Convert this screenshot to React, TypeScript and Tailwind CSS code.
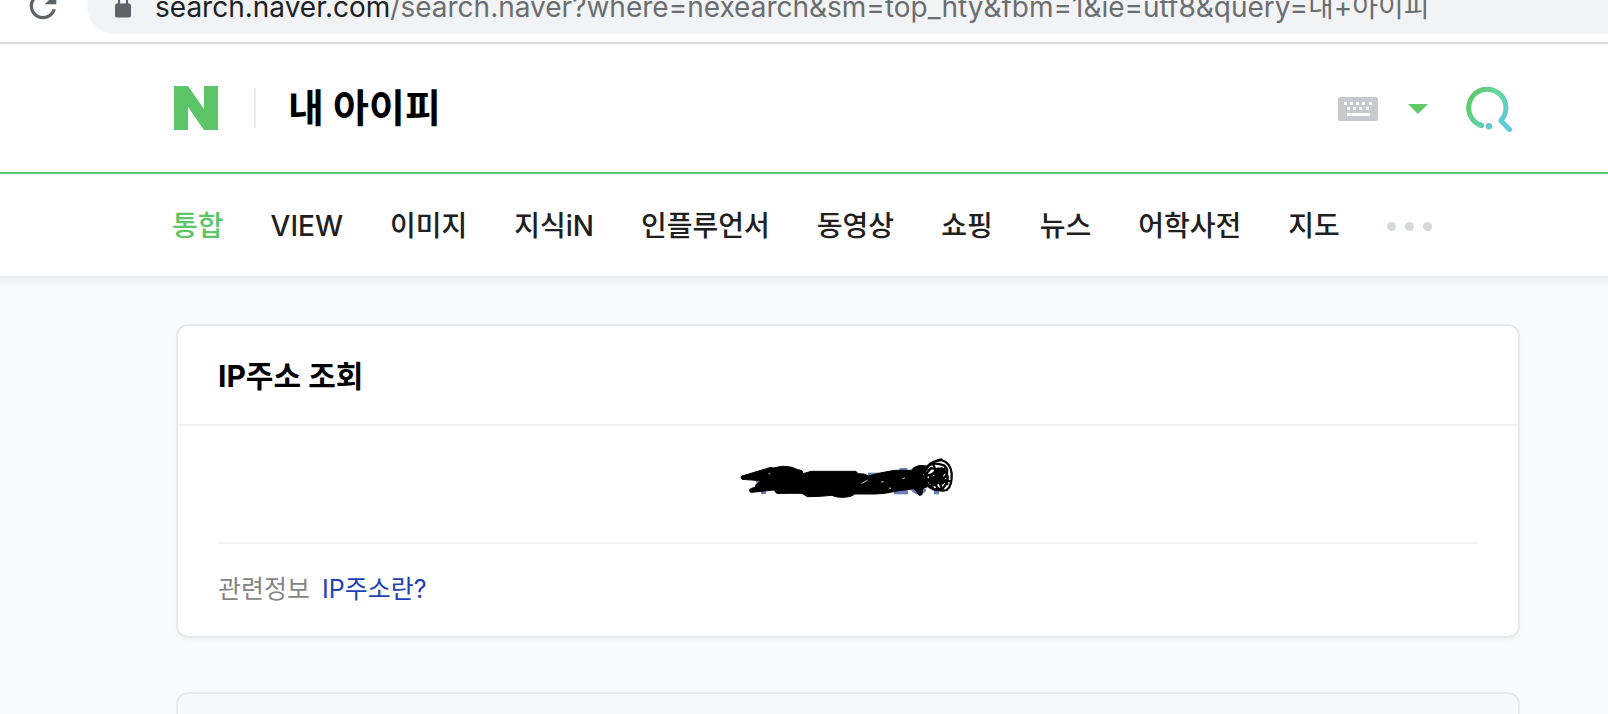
import { useState } from 'react';
import { MdRefresh } from 'react-icons/md';

const tabs = [
  { id: 'all', label: '통합' },
  { id: 'view', label: 'VIEW' },
  { id: 'image', label: '이미지' },
  { id: 'kin', label: '지식iN' },
  { id: 'influencer', label: '인플루언서' },
  { id: 'video', label: '동영상' },
  { id: 'shopping', label: '쇼핑' },
  { id: 'news', label: '뉴스' },
  { id: 'dict', label: '어학사전' },
  { id: 'map', label: '지도' },
];

function LockIcon() {
  return (
    <svg viewBox="0 0 24 24" className="size-6 shrink-0 text-[#5f6368]">
      <rect x="4" y="8.5" width="16" height="14" rx="2" fill="currentColor" />
      <path d="M8 10V5a4 4 0 0 1 8 0v5" fill="none" stroke="currentColor" strokeWidth="2.2" />
    </svg>
  );
}

function KeyboardIcon() {
  return (
    <svg viewBox="0 0 40 24" className="h-6 w-10">
      <rect width="40" height="24" rx="2.5" fill="#c8c8cf" />
      <g fill="#fff">
        {[6, 12, 18, 24, 31].map((x) => (
          <rect key={x} x={x} y="5" width="3" height="3" />
        ))}
        {[9, 15, 21, 28].map((x) => (
          <rect key={x} x={x} y="10" width="3" height="3" />
        ))}
        <rect x="9" y="16" width="23" height="3" />
      </g>
    </svg>
  );
}

function SearchIcon() {
  return (
    <svg viewBox="0 0 46 46" className="size-[46px]">
      <defs>
        <linearGradient id="q" x1="6" y1="8" x2="42" y2="30" gradientUnits="userSpaceOnUse">
          <stop offset="0" stopColor="#5bc96a" />
          <stop offset="0.5" stopColor="#66d79d" />
          <stop offset="0.95" stopColor="#5fcadb" />
        </linearGradient>
        <linearGradient id="q-end" x1="6" y1="24" x2="20" y2="42" gradientUnits="userSpaceOnUse">
          <stop offset="0" stopColor="#5fcf80" stopOpacity="0" />
          <stop offset="1" stopColor="#5ecdc0" />
        </linearGradient>
      </defs>
      <g fill="none" strokeWidth="5" strokeLinecap="round" strokeLinejoin="round">
        <path d="M15.5 39.5A18.6 18.6 0 1 1 34.8 34.6L43.5 43.5" stroke="url(#q)" />
        <path d="M2.6 24A18.6 18.6 0 0 0 15.5 39.5" stroke="url(#q-end)" />
      </g>
      <circle cx="23" cy="40.3" r="3.2" fill="#5fcbd2" />
    </svg>
  );
}

// pen strokes that hide the address
function Scribble() {
  return (
    <svg viewBox="-6 12 780 240" className="h-20 w-[260px]" role="img" aria-label="IP">
      <g fill="#6a7fb8">
        <rect x="123" y="140" width="15" height="22" />
        <rect x="108" y="118" width="10" height="10" />
        <path d="M166 150h34v12h-26z" />
        <rect x="522" y="142" width="42" height="21" />
        <path d="M572 146h46v8q-8 9-22 9-14 0-24-14z" />
        <rect x="642" y="144" width="15" height="19" />
        <rect x="444" y="98" width="34" height="10" />
        <rect x="538" y="84" width="24" height="10" />
      </g>
      <path
        d="M66 108L146 84Q154 80 160 84Q190 74 216 82Q232 90 246 92L249 101L274 94H408L414 101L432 102L446 108L480 99L524 91L574 91Q582 78 604 77L618 82Q620 96 608 102L616 118L622 140L608 146L606 164L598 166L582 146L530 153Q490 164 432 162L404 162Q394 172 366 172Q346 172 336 166Q300 170 262 170L246 160L170 160L162 150L104 156Q88 160 88 150Q92 144 106 142Q104 132 124 122L66 118Q60 113 66 108Z"
        fill="#000"
        stroke="#000"
        strokeWidth="3"
        strokeLinejoin="round"
      />
      <g fill="none" stroke="#000" strokeWidth="7" strokeLinecap="round" strokeLinejoin="round">
        <path d="M580 92Q590 74 622 80Q636 62 664 60Q692 68 695 100Q697 138 680 150Q662 156 632 144Q610 120 616 92Q630 64 664 58" />
        <path d="M626 76Q644 66 672 76Q690 90 676 110Q650 130 622 120Q612 100 634 84L680 100Q690 122 668 146L640 148L630 110L654 86L672 96L648 134L626 140" />
        <path d="M622 106L650 100L682 132M640 72L652 108L676 84M634 130L668 118L690 124M646 92L664 142M660 100L638 122L656 148" />
      </g>
      <path d="M644 84L668 82L680 94L668 108L678 126L664 136L646 128L628 134L622 116L648 104Z" fill="#000" />
      <g fill="none" stroke="#fff" strokeWidth="3" strokeLinecap="round">
        <path d="M426 130L442 121M147 101L150 102M508 144L512 145M484 126L490 125M548 116L554 114" strokeOpacity="0.8" />
      </g>
    </svg>
  );
}

function AddressBar() {
  return (
    <div className="flex h-11 items-end overflow-hidden border-b-2 border-[#dcdcdc] bg-white pb-2 pl-[23px]">
      <div className="flex h-14 w-full shrink-0 items-center gap-6">
        <button type="button" aria-label="새로고침" className="shrink-0 text-[#5f6368]">
          <MdRefresh className="size-10" />
        </button>
        <label className="flex h-full grow items-center rounded-l-full bg-[#f1f3f4] pt-0.5 pl-6 text-[28px] leading-10">
          <LockIcon />
          <span className="ml-5 text-[#202124]">search.naver.com</span>
          <input
            type="text"
            aria-label="주소"
            defaultValue="/search.naver?where=nexearch&sm=top_hty&fbm=1&ie=utf8&query=내+아이피"
            className="min-w-0 grow bg-transparent text-[#6b6e71] outline-none"
          />
        </label>
      </div>
    </div>
  );
}

function SearchHeader() {
  const [query, setQuery] = useState('내 아이피');

  return (
    <form
      onSubmit={(e) => e.preventDefault()}
      className="relative z-10 flex h-[130px] items-center border-b-2 border-[#5ec77c] bg-white pr-24 pl-[174px]"
    >
      <a href="#" aria-label="NAVER" className="shrink-0">
        <svg viewBox="0 0 44 44" className="size-11">
          <path d="M0 0H14L30 23V0H44V44H30L14 21V44H0Z" fill="#5bc568" />
        </svg>
      </a>
      <span className="mr-8 ml-9 h-10 w-0.5 shrink-0 bg-[#e8ecef]" />
      <input
        type="text"
        aria-label="검색어"
        value={query}
        onChange={(e) => setQuery(e.target.value)}
        className="min-w-0 grow bg-transparent text-[39px] leading-[56px] font-bold text-black outline-none"
      />
      <div className="flex shrink-0 items-center pt-0.5">
        <button type="button" aria-label="한글 입력기">
          <KeyboardIcon />
        </button>
        <button type="button" aria-label="자동완성 펼치기" className="ml-[30px]">
          <svg viewBox="0 0 20 10" className="h-2.5 w-5">
            <path d="M0 0H20L10 10Z" fill="#5ecb64" />
          </svg>
        </button>
        <button type="submit" aria-label="검색" className="ml-[38px]">
          <SearchIcon />
        </button>
      </div>
    </form>
  );
}

function TabBar() {
  const [active, setActive] = useState('all');

  return (
    <nav className="relative flex h-[102px] items-center gap-[47px] bg-white pt-0.5 pl-[172px] text-[28px] leading-10 font-medium whitespace-nowrap shadow-[0_-3px_8px_6px_rgba(60,70,80,0.1)]">
      {tabs.map((tab) => (
        <a
          key={tab.id}
          href="#"
          onClick={() => setActive(tab.id)}
          className={active === tab.id ? 'text-[#5bc568]' : 'text-[#202020]'}
        >
          {tab.label}
        </a>
      ))}
      <button type="button" aria-label="더보기" className="flex gap-[9px]">
        <span className="size-[9px] rounded-full bg-[#d5d8dc]" />
        <span className="size-[9px] rounded-full bg-[#d5d8dc]" />
        <span className="size-[9px] rounded-full bg-[#d5d8dc]" />
      </button>
    </nav>
  );
}

export default function App() {
  return (
    <div className="h-screen overflow-hidden bg-[#f9fafc] font-['Inter','Noto_Sans_CJK_KR',sans-serif]">
      <AddressBar />
      <SearchHeader />
      <TabBar />

      <main className="flex flex-col gap-[54px] pt-12 pr-[88px] pl-44">
        <section className="rounded-xl border-2 border-[#e8e9ed] bg-white shadow-[0_2px_3px_rgba(0,0,0,0.03)]">
          <h2 className="border-b-2 border-[#f0f1f3] px-10 pt-7 pb-[26px] text-[30px] leading-[44px] font-bold text-black">
            IP주소 조회
          </h2>
          <div className="px-10">
            <div className="flex justify-center border-b-2 border-[#f2f3f4] py-[18px]">
              <Scribble />
            </div>
            <div className="flex gap-3 pt-[27px] pb-[29px] text-[25px] leading-9">
              <span className="text-[#858585]">관련정보</span>
              <a href="#" className="text-[#1a41b5]">IP주소란?</a>
            </div>
          </div>
        </section>
        <section className="h-40 rounded-xl border-2 border-[#e8e9ed] bg-[#f7f8fa]" />
      </main>
    </div>
  );
}
